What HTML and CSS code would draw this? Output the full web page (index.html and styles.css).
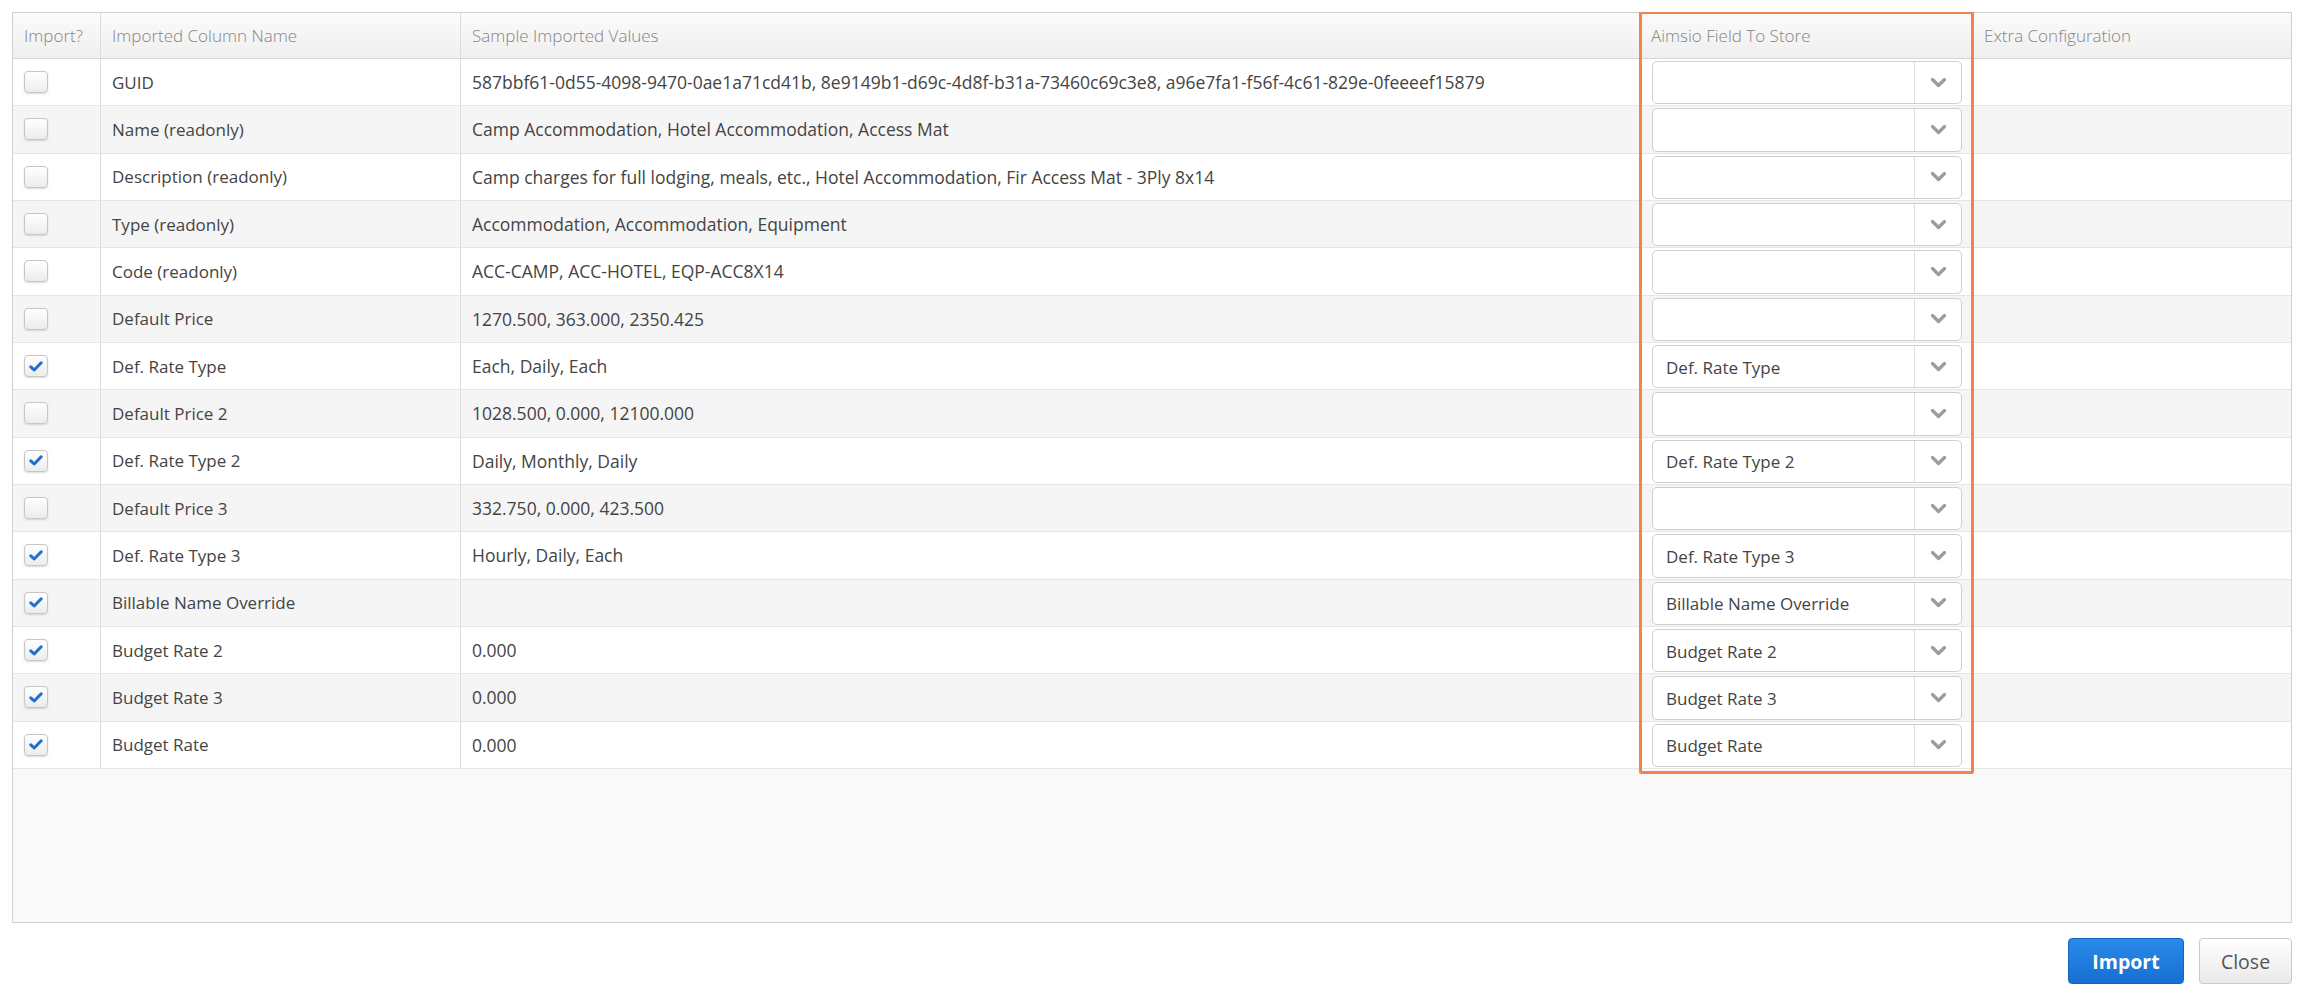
FILE: index.html
```html
<!DOCTYPE html>
<html>
<head>
<meta charset="utf-8">
<link rel="stylesheet" href="styles.css">
</head>
<body>
<div class="grid">
  <div class="row head">
    <div class="cell">Import?</div>
    <div class="cell">Imported Column Name</div>
    <div class="cell">Sample Imported Values</div>
    <div class="cell">Aimsio Field To Store</div>
    <div class="cell last">Extra Configuration</div>
  </div>

  <div class="row">
    <div class="cell"><span class="cb"></span></div>
    <div class="cell">GUID</div>
    <div class="cell sample">587bbf61-0d55-4098-9470-0ae1a71cd41b, 8e9149b1-d69c-4d8f-b31a-73460c69c3e8, a96e7fa1-f56f-4c61-829e-0feeeef15879</div>
    <div class="cell sel-cell"><div class="sel"><span class="val"></span><span class="arr"><svg width="15" height="10" viewBox="0 0 15 10"><polyline points="1.5,1.5 7.5,7.5 13.5,1.5" /></svg></span></div></div>
    <div class="cell last"></div>
  </div>
  <div class="row alt">
    <div class="cell"><span class="cb"></span></div>
    <div class="cell">Name (readonly)</div>
    <div class="cell sample">Camp Accommodation, Hotel Accommodation, Access Mat</div>
    <div class="cell sel-cell"><div class="sel"><span class="val"></span><span class="arr"><svg width="15" height="10" viewBox="0 0 15 10"><polyline points="1.5,1.5 7.5,7.5 13.5,1.5" /></svg></span></div></div>
    <div class="cell last"></div>
  </div>
  <div class="row">
    <div class="cell"><span class="cb"></span></div>
    <div class="cell">Description (readonly)</div>
    <div class="cell sample">Camp charges for full lodging, meals, etc., Hotel Accommodation, Fir Access Mat - 3Ply 8x14</div>
    <div class="cell sel-cell"><div class="sel"><span class="val"></span><span class="arr"><svg width="15" height="10" viewBox="0 0 15 10"><polyline points="1.5,1.5 7.5,7.5 13.5,1.5" /></svg></span></div></div>
    <div class="cell last"></div>
  </div>
  <div class="row alt">
    <div class="cell"><span class="cb"></span></div>
    <div class="cell">Type (readonly)</div>
    <div class="cell sample">Accommodation, Accommodation, Equipment</div>
    <div class="cell sel-cell"><div class="sel"><span class="val"></span><span class="arr"><svg width="15" height="10" viewBox="0 0 15 10"><polyline points="1.5,1.5 7.5,7.5 13.5,1.5" /></svg></span></div></div>
    <div class="cell last"></div>
  </div>
  <div class="row">
    <div class="cell"><span class="cb"></span></div>
    <div class="cell">Code (readonly)</div>
    <div class="cell sample">ACC-CAMP, ACC-HOTEL, EQP-ACC8X14</div>
    <div class="cell sel-cell"><div class="sel"><span class="val"></span><span class="arr"><svg width="15" height="10" viewBox="0 0 15 10"><polyline points="1.5,1.5 7.5,7.5 13.5,1.5" /></svg></span></div></div>
    <div class="cell last"></div>
  </div>
  <div class="row alt">
    <div class="cell"><span class="cb"></span></div>
    <div class="cell">Default Price</div>
    <div class="cell sample">1270.500, 363.000, 2350.425</div>
    <div class="cell sel-cell"><div class="sel"><span class="val"></span><span class="arr"><svg width="15" height="10" viewBox="0 0 15 10"><polyline points="1.5,1.5 7.5,7.5 13.5,1.5" /></svg></span></div></div>
    <div class="cell last"></div>
  </div>
  <div class="row">
    <div class="cell"><span class="cb on"><svg width="14" height="11" viewBox="0 0 14 11"><polyline points="1.8,5.8 5.2,9 12.2,1.8" /></svg></span></div>
    <div class="cell">Def. Rate Type</div>
    <div class="cell sample">Each, Daily, Each</div>
    <div class="cell sel-cell"><div class="sel"><span class="val">Def. Rate Type</span><span class="arr"><svg width="15" height="10" viewBox="0 0 15 10"><polyline points="1.5,1.5 7.5,7.5 13.5,1.5" /></svg></span></div></div>
    <div class="cell last"></div>
  </div>
  <div class="row alt">
    <div class="cell"><span class="cb"></span></div>
    <div class="cell">Default Price 2</div>
    <div class="cell sample">1028.500, 0.000, 12100.000</div>
    <div class="cell sel-cell"><div class="sel"><span class="val"></span><span class="arr"><svg width="15" height="10" viewBox="0 0 15 10"><polyline points="1.5,1.5 7.5,7.5 13.5,1.5" /></svg></span></div></div>
    <div class="cell last"></div>
  </div>
  <div class="row">
    <div class="cell"><span class="cb on"><svg width="14" height="11" viewBox="0 0 14 11"><polyline points="1.8,5.8 5.2,9 12.2,1.8" /></svg></span></div>
    <div class="cell">Def. Rate Type 2</div>
    <div class="cell sample">Daily, Monthly, Daily</div>
    <div class="cell sel-cell"><div class="sel"><span class="val">Def. Rate Type 2</span><span class="arr"><svg width="15" height="10" viewBox="0 0 15 10"><polyline points="1.5,1.5 7.5,7.5 13.5,1.5" /></svg></span></div></div>
    <div class="cell last"></div>
  </div>
  <div class="row alt">
    <div class="cell"><span class="cb"></span></div>
    <div class="cell">Default Price 3</div>
    <div class="cell sample">332.750, 0.000, 423.500</div>
    <div class="cell sel-cell"><div class="sel"><span class="val"></span><span class="arr"><svg width="15" height="10" viewBox="0 0 15 10"><polyline points="1.5,1.5 7.5,7.5 13.5,1.5" /></svg></span></div></div>
    <div class="cell last"></div>
  </div>
  <div class="row">
    <div class="cell"><span class="cb on"><svg width="14" height="11" viewBox="0 0 14 11"><polyline points="1.8,5.8 5.2,9 12.2,1.8" /></svg></span></div>
    <div class="cell">Def. Rate Type 3</div>
    <div class="cell sample">Hourly, Daily, Each</div>
    <div class="cell sel-cell"><div class="sel"><span class="val">Def. Rate Type 3</span><span class="arr"><svg width="15" height="10" viewBox="0 0 15 10"><polyline points="1.5,1.5 7.5,7.5 13.5,1.5" /></svg></span></div></div>
    <div class="cell last"></div>
  </div>
  <div class="row alt">
    <div class="cell"><span class="cb on"><svg width="14" height="11" viewBox="0 0 14 11"><polyline points="1.8,5.8 5.2,9 12.2,1.8" /></svg></span></div>
    <div class="cell">Billable Name Override</div>
    <div class="cell sample"></div>
    <div class="cell sel-cell"><div class="sel"><span class="val">Billable Name Override</span><span class="arr"><svg width="15" height="10" viewBox="0 0 15 10"><polyline points="1.5,1.5 7.5,7.5 13.5,1.5" /></svg></span></div></div>
    <div class="cell last"></div>
  </div>
  <div class="row">
    <div class="cell"><span class="cb on"><svg width="14" height="11" viewBox="0 0 14 11"><polyline points="1.8,5.8 5.2,9 12.2,1.8" /></svg></span></div>
    <div class="cell">Budget Rate 2</div>
    <div class="cell sample">0.000</div>
    <div class="cell sel-cell"><div class="sel"><span class="val">Budget Rate 2</span><span class="arr"><svg width="15" height="10" viewBox="0 0 15 10"><polyline points="1.5,1.5 7.5,7.5 13.5,1.5" /></svg></span></div></div>
    <div class="cell last"></div>
  </div>
  <div class="row alt">
    <div class="cell"><span class="cb on"><svg width="14" height="11" viewBox="0 0 14 11"><polyline points="1.8,5.8 5.2,9 12.2,1.8" /></svg></span></div>
    <div class="cell">Budget Rate 3</div>
    <div class="cell sample">0.000</div>
    <div class="cell sel-cell"><div class="sel"><span class="val">Budget Rate 3</span><span class="arr"><svg width="15" height="10" viewBox="0 0 15 10"><polyline points="1.5,1.5 7.5,7.5 13.5,1.5" /></svg></span></div></div>
    <div class="cell last"></div>
  </div>
  <div class="row">
    <div class="cell"><span class="cb on"><svg width="14" height="11" viewBox="0 0 14 11"><polyline points="1.8,5.8 5.2,9 12.2,1.8" /></svg></span></div>
    <div class="cell">Budget Rate</div>
    <div class="cell sample">0.000</div>
    <div class="cell sel-cell"><div class="sel"><span class="val">Budget Rate</span><span class="arr"><svg width="15" height="10" viewBox="0 0 15 10"><polyline points="1.5,1.5 7.5,7.5 13.5,1.5" /></svg></span></div></div>
    <div class="cell last"></div>
  </div>

  <div class="highlight"></div>
</div>

<div class="actions">
  <button class="btn primary">Import</button>
  <button class="btn">Close</button>
</div>
</body>
</html>
```

FILE: styles.css
```css
* { box-sizing: border-box; }

html, body {
  background: #ffffff;
}

body {
  margin: 12px 9px 0 12px;
  font-family: "Open Sans", "Liberation Sans", sans-serif;
  font-size: 17px;
  color: #444;
}

.grid {
  position: relative;
  height: 911px;
  border: 1px solid #cfcfcf;
  background: #f9f9f9;
}

.row {
  display: grid;
  grid-template-columns: 88px 360px 1179px 333px 1fr;
  height: 47.33px;
  background: #ffffff;
  border-bottom: 1px solid #e6e6e6;
}

.row.alt {
  background: #f5f5f5;
}

.row.head {
  height: 46px;
  background: linear-gradient(#fbfbfb, #efefef);
  border-bottom: 1px solid #d6d6d6;
  color: #858585;
  font-weight: 300;
}

.cell {
  display: flex;
  align-items: center;
  padding: 0 11px;
  border-right: 1px solid #dcdcdc;
  white-space: nowrap;
  overflow: hidden;
}

.cell.sample {
  font-size: 17.5px;
}

.cell.last {
  border-right: none;
}

.cb {
  width: 24px;
  height: 22px;
  border: 1px solid #c6c6c6;
  border-radius: 4px;
  background: linear-gradient(#ffffff, #ececec);
  box-shadow: 0 1px 2px rgba(0, 0, 0, 0.14);
  display: flex;
  align-items: center;
  justify-content: center;
}

.cb svg polyline {
  fill: none;
  stroke: #1f6fcc;
  stroke-width: 3;
  stroke-linecap: round;
  stroke-linejoin: round;
}

.sel-cell {
  padding: 2px 10px 1px 12px;
  align-items: stretch;
}

.sel {
  flex: 1;
  display: flex;
  border: 1px solid #cfcfcf;
  border-radius: 5px;
  background: #ffffff;
}

.sel .val {
  flex: 1;
  display: flex;
  align-items: center;
  padding-left: 13px;
  padding-top: 1px;
  color: #444;
}

.sel .arr {
  width: 47px;
  border-left: 1px solid #dedede;
  display: flex;
  align-items: center;
  justify-content: center;
}

.sel .arr svg polyline {
  fill: none;
  stroke: #9c9c9c;
  stroke-width: 3.2;
  stroke-linecap: round;
  stroke-linejoin: round;
}

.highlight {
  position: absolute;
  left: 1626px;
  top: -2px;
  width: 335px;
  height: 763px;
  border: 3px solid #f1834c;
  border-radius: 2px;
  pointer-events: none;
}

.actions {
  display: flex;
  justify-content: flex-end;
  gap: 15px;
  margin-top: 15px;
}

.btn {
  height: 46px;
  padding: 0;
  font-family: "Open Sans", "Liberation Sans", sans-serif;
  font-size: 19.5px;
  border-radius: 4px;
  border: 1px solid #c9c9c9;
  background: linear-gradient(#ffffff, #e9e9e9);
  color: #555;
  width: 93px;
  box-shadow: 0 1px 1px rgba(0, 0, 0, 0.08);
}

.btn.primary {
  width: 116px;
  font-weight: 700;
  color: #ffffff;
  border: 1px solid #1565c0;
  background: linear-gradient(#2a8aea, #166fd2);
}
```
